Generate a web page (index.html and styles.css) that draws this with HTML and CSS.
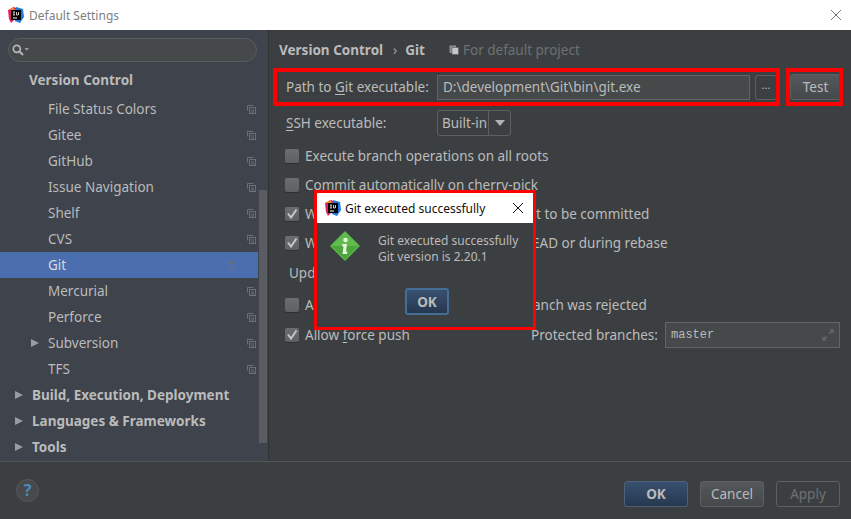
FILE: index.html
```html
<!DOCTYPE html>
<html lang="en">
<head>
    <meta charset="UTF-8">
    <meta name="viewport" content="width=device-width, initial-scale=1.0">
    <title>Default Settings</title>
    <link rel="stylesheet" href="styles.css">
</head>
<body>
    <div id="window">
        <div class="titlebar">
            <svg class="app-icon" viewBox="0 0 16 16" width="16" height="16">
                <path d="M0 3 L6 0 L10 2 L7 12 L3 16 L1 12 Z" fill="#e0205f"/>
                <path d="M8 0 L15 2 L16 10 L12 16 L7 14 Z" fill="#1f78e0"/>
                <path d="M1 3 L5 0 L7 3 Z" fill="#f28a1e"/>
                <rect x="3" y="3" width="10" height="10" fill="#000"/>
                <rect x="5" y="10.5" width="4" height="1" fill="#fff"/>
                <path d="M5 5 H7 M6 5 V8 M5 8 H7 M8.5 5 V8 H10 M10.5 5 V8" stroke="#fff" stroke-width="0.8" fill="none"/>
            </svg>
            <span class="title-text">Default Settings</span>
            <svg class="close-icon" viewBox="0 0 12 12" width="12" height="12">
                <path d="M1 1 L11 11 M11 1 L1 11" stroke="#777" stroke-width="1" fill="none"/>
            </svg>
        </div>

        <div class="main">
            <div class="sidebar">
                <div class="search-box">
                    <svg viewBox="0 0 18 12" width="18" height="12">
                        <circle cx="4.8" cy="4.8" r="3.5" stroke="#b4b8bb" stroke-width="1.7" fill="none"/>
                        <path d="M7.5 7.5 L11 11" stroke="#b4b8bb" stroke-width="2"/>
                        <path d="M12.5 4 H17 L14.75 6.8 Z" fill="#9a9ea1"/>
                    </svg>
                </div>
                <div class="tree">
                    <div class="tree-row group-top">Version Control</div>
                    <div class="tree-row child"><span>File Status Colors</span><svg class="copy-icon"><use href="#copy"/></svg></div>
                    <div class="tree-row child"><span>Gitee</span><svg class="copy-icon"><use href="#copy"/></svg></div>
                    <div class="tree-row child"><span>GitHub</span><svg class="copy-icon"><use href="#copy"/></svg></div>
                    <div class="tree-row child"><span>Issue Navigation</span><svg class="copy-icon"><use href="#copy"/></svg></div>
                    <div class="tree-row child"><span>Shelf</span><svg class="copy-icon"><use href="#copy"/></svg></div>
                    <div class="tree-row child"><span>CVS</span><svg class="copy-icon"><use href="#copy"/></svg></div>
                    <div class="tree-row child selected"><span>Git</span><svg class="copy-icon"><use href="#copy"/></svg></div>
                    <div class="tree-row child"><span>Mercurial</span><svg class="copy-icon"><use href="#copy"/></svg></div>
                    <div class="tree-row child"><span>Perforce</span><svg class="copy-icon"><use href="#copy"/></svg></div>
                    <div class="tree-row child"><i class="arrow child-arrow"></i><span>Subversion</span><svg class="copy-icon"><use href="#copy"/></svg></div>
                    <div class="tree-row child"><span>TFS</span><svg class="copy-icon"><use href="#copy"/></svg></div>
                    <div class="tree-row group"><i class="arrow"></i><span>Build, Execution, Deployment</span></div>
                    <div class="tree-row group"><i class="arrow"></i><span>Languages &amp; Frameworks</span></div>
                    <div class="tree-row group"><i class="arrow"></i><span>Tools</span></div>
                </div>
                <div class="scrollbar"></div>
            </div>

            <div class="content">
                <div class="breadcrumb">
                    <b>Version Control</b>
                    <span class="crumb-sep">&#x203A;</span>
                    <b>Git</b>
                    <svg class="project-icon" viewBox="0 0 10 10" width="10" height="10">
                        <rect x="0.5" y="0.5" width="6.5" height="7.5" fill="#8b9094"/>
                        <rect x="3" y="2.5" width="6.5" height="7" fill="#c3c7ca" stroke="#55595c" stroke-width="0.6"/>
                    </svg>
                    <span class="for-project">For default project</span>
                </div>

                <div class="form-row path-row">
                    <label class="field-label">Path to <u>G</u>it executable:</label>
                    <div class="path-input">D:\development\Git\bin\git.exe</div>
                    <button class="dots-btn">...</button>
                    <button class="btn test-btn">Test</button>
                </div>
                <div class="form-row ssh-row">
                    <label class="field-label"><u>S</u>SH executable:</label>
                    <div class="select-box"><span class="select-value">Built-in</span><span class="select-arrow"></span></div>
                </div>

                <div class="check-row first-check"><i class="check"></i>Execute branch operations on all roots</div>
                <div class="check-row"><i class="check"></i>Commit automatically on cherry-pick</div>
                <div class="check-row"><i class="check on"><svg viewBox="0 0 14 14" width="14" height="14"><use href="#tick"/></svg></i><span class="hidden-part">W</span><span class="tail tail-commit">t to be committed</span></div>
                <div class="check-row"><i class="check on"><svg viewBox="0 0 14 14" width="14" height="14"><use href="#tick"/></svg></i><span class="hidden-part">W</span><span class="tail tail-head">HEAD or during rebase</span></div>
                <div class="update-row">Upd</div>
                <div class="check-row"><i class="check"></i><span class="hidden-part">A</span><span class="tail tail-rejected">anch was rejected</span></div>
                <div class="check-row force-row">
                    <i class="check on"><svg viewBox="0 0 14 14" width="14" height="14"><use href="#tick"/></svg></i>
                    <span>Allow <u>f</u>orce push</span>
                    <span class="protected-label">Protected branches:</span>
                    <div class="protected-input">
                        <span>master</span>
                        <svg viewBox="0 0 16 16" width="14" height="14"><path d="M9.5 1.5 H14.5 V6.5 L12.8 4.8 L10.6 7 L9 5.4 L11.2 3.2 Z M6.5 14.5 H1.5 V9.5 L3.2 11.2 L5.4 9 L7 10.6 L4.8 12.8 Z" fill="#62676a"/></svg>
                    </div>
                </div>
            </div>
        </div>

        <div class="footer">
            <div class="help-btn">?</div>
            <div class="footer-btns">
                <button class="btn primary">OK</button>
                <button class="btn">Cancel</button>
                <button class="btn disabled">Apply</button>
            </div>
        </div>

        <div class="mark mark-path"></div>
        <div class="mark mark-test"></div>

        <div class="dialog">
            <div class="dialog-title">
                <svg class="app-icon" viewBox="0 0 16 16" width="16" height="16">
                    <path d="M0 3 L6 0 L10 2 L7 12 L3 16 L1 12 Z" fill="#e0205f"/>
                    <path d="M8 0 L15 2 L16 10 L12 16 L7 14 Z" fill="#1f78e0"/>
                    <path d="M1 3 L5 0 L7 3 Z" fill="#f28a1e"/>
                    <rect x="3" y="3" width="10" height="10" fill="#000"/>
                    <rect x="5" y="10.5" width="4" height="1" fill="#fff"/>
                    <path d="M5 5 H7 M6 5 V8 M5 8 H7 M8.5 5 V8 H10 M10.5 5 V8" stroke="#fff" stroke-width="0.8" fill="none"/>
                </svg>
                <span class="dialog-title-text">Git executed successfully</span>
                <svg viewBox="0 0 12 12" width="12" height="12">
                    <path d="M1 1 L11 11 M11 1 L1 11" stroke="#111" stroke-width="1" fill="none"/>
                </svg>
            </div>
            <div class="dialog-body">
                <svg class="info-icon" viewBox="0 0 30 30" width="30" height="30">
                    <path d="M15 1 L29 15 L15 29 L1 15 Z" fill="#4aa53a" stroke="#54b544" stroke-linejoin="round" stroke-width="1.5"/>
                    <path d="M15 1 L29 15 L1 15 Z" fill="#62bb4e"/>
                    <circle cx="15.5" cy="9" r="2.2" fill="#e8f5e0"/>
                    <path d="M12.5 13 H17 L16 20.5 L17.5 20.5 L17 23 H12.5 L13.5 15.5 H12.2 Z" fill="#e8f5e0"/>
                </svg>
                <div class="dialog-msg">
                    <div>Git executed successfully</div>
                    <div>Git version is 2.20.1</div>
                </div>
            </div>
            <button class="btn primary dialog-ok">OK</button>
        </div>
    </div>

    <svg class="defs">
        <defs>
            <g id="copy" fill="none" stroke="#6b7076" stroke-width="1">
                <path d="M1.5 6.5 V1.5 H7.5"/>
                <rect x="3.5" y="3.5" width="6" height="6"/>
                <path d="M5 6 H8 M5 8 H8"/>
            </g>
            <path id="tick" d="M3 6.5 L6 10.5 L11.5 2.5" stroke="#c4c7c9" stroke-width="2" fill="none"/>
        </defs>
    </svg>
</body>
</html>
```

FILE: styles.css
```css
* {
    box-sizing: border-box;
}
html, body {
    margin: 0;
    padding: 0;
}
body {
    font-family: "Noto Sans", Arial, sans-serif;
    font-size: 13.5px;
    color: #bbbbbb;
    background-color: #3c3f41;
    overflow: hidden;
}
u {
    text-underline-offset: 2px;
}
.defs {
    width: 0;
    height: 0;
    display: block;
}
#window {
    position: relative;
    width: 851px;
    height: 519px;
    display: flex;
    flex-direction: column;
    overflow: hidden;
}
.titlebar {
    height: 30px;
    background-color: #fff;
    display: flex;
    align-items: center;
    padding: 0 9px 0 8px;
    flex: none;
}
.app-icon {
    flex: none;
}
.title-text {
    margin-left: 5px;
    color: #7f7f7f;
    font-size: 12px;
    flex: 1;
}
.close-icon {
    flex: none;
}
.main {
    height: 431px;
    display: flex;
    flex: none;
}

/* left tree */
.sidebar {
    position: relative;
    width: 269px;
    flex: none;
    background-color: #3e434c;
    border-right: 1px solid #323232;
    padding-top: 8px;
}
.search-box {
    height: 24px;
    margin: 0 11px 0 8px;
    border: 1px solid #5a5d5f;
    border-radius: 12px;
    background-color: #45494a;
    display: flex;
    align-items: center;
    padding-left: 3px;
}
.tree {
    padding-top: 5px;
}
.tree-row {
    height: 26px;
    display: flex;
    align-items: center;
    position: relative;
    white-space: nowrap;
}
.group-top {
    padding-left: 29px;
    font-weight: 700;
    height: 26px;
}
.group-top + .tree-row {
    margin-top: 3px;
}
.group {
    padding-left: 32px;
    font-weight: 700;
}
.child {
    padding-left: 48px;
    padding-right: 16px;
}
.child span {
    flex: 1;
}
.selected {
    background-color: #4b6eaf;
    color: #d6d9dc;
    margin-right: 10px;
}
.selected .copy-icon {
    color: #dfe1e5;
}
.copy-icon {
    width: 11px;
    height: 11px;
    flex: none;
    margin-right: -5px;
}
.selected .copy-icon {
    margin-right: 5px;
}
.arrow {
    position: absolute;
    left: 15px;
    top: 9px;
    border-left: 8px solid #9a9d9f;
    border-top: 4px solid transparent;
    border-bottom: 4px solid transparent;
}
.child-arrow {
    left: 31px;
}
.scrollbar {
    position: absolute;
    right: 1px;
    top: 160px;
    width: 8px;
    height: 253px;
    background-color: #595c63;
}

/* right settings panel */
.content {
    flex: 1;
    padding: 10px 11px 0 10px;
    min-width: 0;
    background-color: #3c3f41;
}
.breadcrumb {
    height: 20px;
    display: flex;
    align-items: center;
    white-space: nowrap;
}
.breadcrumb b {
    color: #bbbbbb;
}
.crumb-sep {
    margin: 0 8px 0 10px;
    color: #a0a0a0;
}
.project-icon {
    margin-left: 24px;
    margin-right: 4px;
}
.for-project {
    color: #6e7173;
}
.form-row {
    display: flex;
    align-items: center;
    padding-left: 7px;
    white-space: nowrap;
}
.path-row {
    margin-top: 14px;
    height: 26px;
}
.ssh-row {
    margin-top: 10px;
    height: 26px;
}
.field-label {
    width: 151px;
    flex: none;
}
.path-input {
    width: 313px;
    height: 25px;
    line-height: 23px;
    border: 1px solid #646464;
    background-color: #45494a;
    padding-left: 5px;
    color: #bbbbbb;
    flex: none;
}
button {
    font-family: inherit;
}
.dots-btn {
    width: 22px;
    height: 25px;
    margin-left: 5px;
    padding: 0 0 5px;
    border: 1px solid #5e6060;
    border-radius: 3px;
    background-color: #3c3f41;
    color: #bbbbbb;
    font-size: 11px;
    flex: none;
}
.btn {
    height: 26px;
    width: 64px;
    padding: 0;
    font-size: 13.5px;
    color: #bbbbbb;
    border: 1px solid #5e6060;
    border-radius: 3px;
    background: linear-gradient(#54585a, #46494b);
}
.test-btn {
    width: 51px;
    margin-left: 13px;
    flex: none;
}
.primary {
    font-weight: 700;
    color: #bbbbbb;
    border-color: #4f6176;
    background: linear-gradient(#385170, #263850);
}
.disabled {
    background: #3c3f41;
    color: #6e7173;
}
.select-box {
    width: 74px;
    height: 26px;
    border: 1px solid #5e6060;
    border-radius: 3px;
    display: flex;
    align-items: center;
    flex: none;
}
.select-value {
    width: 51px;
    padding-left: 4px;
    height: 100%;
    line-height: 24px;
    border-right: 1px solid #5e6060;
}
.select-arrow {
    margin-left: 6px;
    border-top: 6px solid #b0b3b5;
    border-left: 5px solid transparent;
    border-right: 5px solid transparent;
}
.first-check {
    margin-top: 5px;
}
.check-row {
    height: 29px;
    display: flex;
    align-items: center;
    padding-left: 6px;
    white-space: nowrap;
    position: relative;
}
.check {
    width: 14px;
    height: 14px;
    margin-right: 6px;
    border-radius: 2px;
    background: linear-gradient(#6a6e70, #5d6163);
    box-shadow: 0 1px 0 #2d2f30;
    flex: none;
    display: block;
}
.check svg {
    display: block;
}
.hidden-part {
    width: 14px;
}
.tail {
    margin-left: 0;
}
.tail-commit {
    margin-left: 217px;
}
.tail-head {
    margin-left: 203px;
}
.tail-rejected {
    margin-left: 214px;
}
.update-row {
    height: 33px;
    line-height: 33px;
    padding-left: 10px;
}
.force-row {
    margin-top: 2px;
    height: 28px;
}
.force-row > span:nth-of-type(1) {
    width: 226px;
    flex: none;
}
.protected-label {
    width: 134px;
    flex: none;
}
.protected-input {
    width: 175px;
    height: 26px;
    border: 1px solid #646464;
    background-color: #45494a;
    display: flex;
    align-items: center;
    justify-content: space-between;
    padding: 0 4px 0 5px;
    font-family: "Liberation Mono", monospace;
    font-size: 12px;
    flex: none;
}

/* bottom bar */
.footer {
    flex: 1;
    border-top: 1px solid #515658;
    background-color: #3c3f41;
    display: flex;
    align-items: center;
    justify-content: space-between;
    padding: 0 11px 0 16px;
}
.help-btn {
    width: 23px;
    height: 23px;
    border-radius: 50%;
    margin-top: 0;
    background-color: #47494b;
    border: 1px solid #55585a;
    color: #4a8bbd;
    font-weight: 700;
    font-size: 16px;
    line-height: 21px;
    text-align: center;
}
.footer-btns {
    display: flex;
    gap: 12px;
    margin-top: 7px;
}

/* red marks drawn over the shot */
.mark {
    position: absolute;
    border: 4px solid #ff0000;
}
.mark-path {
    left: 273px;
    top: 68px;
    width: 507px;
    height: 38px;
}
.mark-test {
    left: 786px;
    top: 68px;
    width: 57px;
    height: 38px;
}

/* message popup */
.dialog {
    position: absolute;
    left: 314px;
    top: 190px;
    width: 222px;
    height: 140px;
    border: 3px solid #ff0000;
    background-color: #3c3f41;
}
.dialog-title {
    height: 30px;
    background-color: #fff;
    display: flex;
    align-items: center;
    padding: 0 9px 0 8px;
}
.dialog-title-text {
    flex: 1;
    margin-left: 4px;
    color: #111;
    font-size: 12px;
}
.dialog-body {
    display: flex;
    padding: 8px 0 0 13px;
}
.info-icon {
    flex: none;
}
.dialog-msg {
    margin-left: 18px;
    padding-top: 2px;
    font-size: 12px;
    line-height: 16px;
}
.dialog-ok {
    position: absolute;
    left: 88px;
    top: 95px;
    width: 44px;
    height: 27px;
    border: 2px solid #466d94;
}
```
